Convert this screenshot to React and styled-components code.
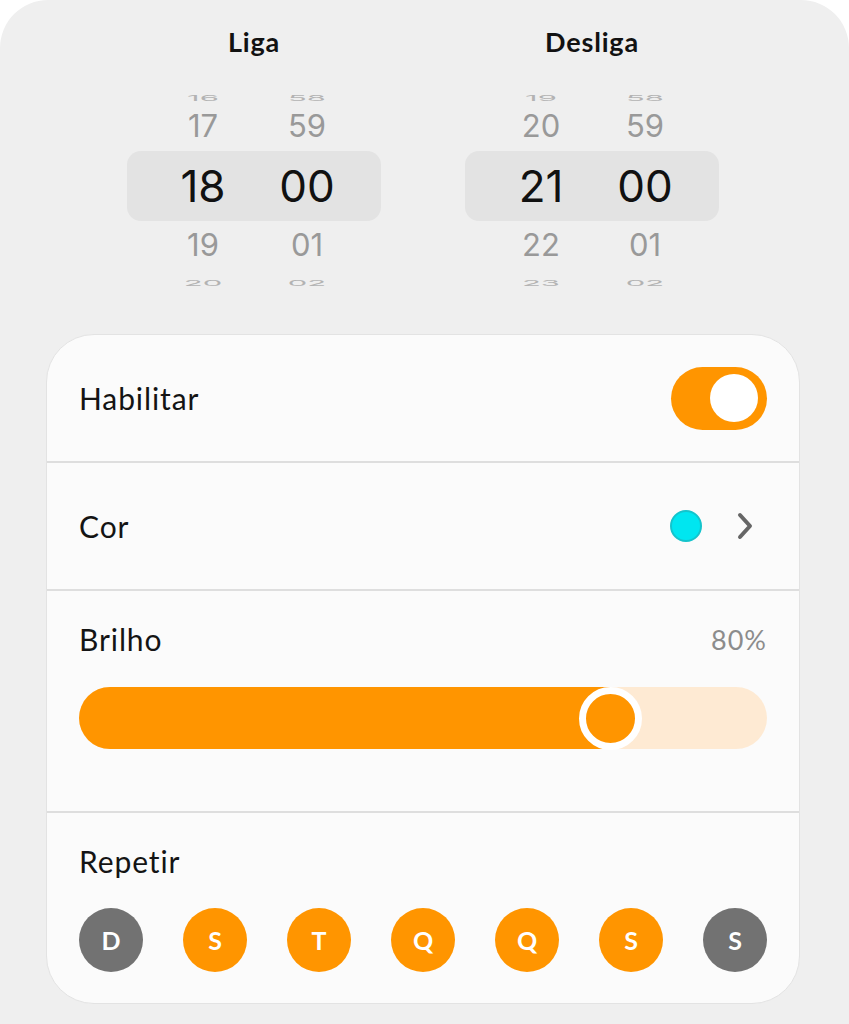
import React from 'react'
import styled, { createGlobalStyle } from 'styled-components'

const ORANGE = '#ff9500'

const Global = createGlobalStyle`
    html, body {
        margin: 0;
        padding: 0;
        background: #ffffff;
    }
    * {
        box-sizing: border-box;
    }
`

const Screen = styled.div`
    min-height: 1024px;
    background: #efefef;
    border-radius: 48px 48px 0 0;
    padding: 27px 0 0 46px;
    font-family: Lato, "Open Sans", sans-serif;
    color: #121212;
`

const Pickers = styled.div`
    display: grid;
    grid-template-columns: 254px 254px;
    column-gap: 84px;
    margin-left: 81px;
`

const PickerColumn = styled.div`
    display: flex;
    flex-direction: column;
    align-items: stretch;
`

const PickerTitle = styled.div`
    text-align: center;
    font-size: 27px;
    font-weight: 700;
    line-height: 30px;
    height: 30px;
    margin-bottom: 26px;
    letter-spacing: 0.8px;
`

const WheelRow = styled.div`
    display: grid;
    grid-template-columns: 104px 104px;
    padding-left: 24px;
    align-items: center;
    height: ${props => props.h}px;
    background: ${props => props.selected ? '#e3e3e3' : 'transparent'};
    border-radius: 14px;
`

const WheelNum = styled.span`
    font-family: Inter, "Liberation Sans", sans-serif;
    text-align: center;
    font-size: ${props => props.selected ? 44 : 31}px;
    font-weight: 400;
    color: ${props => props.selected ? '#111' : props.faded ? '#b3b3b3' : '#999999'};
    transform: ${props => props.faded ? 'scaleY(0.26)' : 'none'};
    line-height: 1;
`

const Card = styled.div`
    width: 754px;
    margin-top: 55px;
    background: #fbfbfb;
    border: 1.5px solid #e3e3e3;
    border-radius: 48px;
    overflow: hidden;
`

const Row = styled.div`
    display: flex;
    flex-direction: ${props => props.column ? 'column' : 'row'};
    align-items: ${props => props.column ? 'stretch' : 'center'};
    justify-content: ${props => props.column ? 'flex-start' : 'space-between'};
    height: ${props => props.h}px;
    padding: ${props => props.column ? '30px 32px 0 32px' : '0 32px'};
    border-bottom: ${props => props.last ? 'none' : '2px solid #dedede'};
`

const Label = styled.span`
    font-size: 30px;
    line-height: 36px;
    letter-spacing: 0.9px;
    color: #141414;
`

const Header = styled.div`
    display: flex;
    justify-content: space-between;
    align-items: center;
    height: 36px;
`

const Percent = styled.span`
    font-size: 27px;
    letter-spacing: 1px;
    color: #8c8c8c;
`

const Toggle = styled.div`
    width: 96px;
    height: 63px;
    border-radius: 32px;
    background: ${props => props.on ? ORANGE : '#d0d0d0'};
    display: flex;
    align-items: center;
    justify-content: ${props => props.on ? 'flex-end' : 'flex-start'};
    padding: 0 9px;
`

const Knob = styled.div`
    width: 48px;
    height: 48px;
    border-radius: 50%;
    background: #ffffff;
`

const ColorPick = styled.div`
    display: flex;
    align-items: center;
    gap: 35px;
    margin-right: 14px;
`

const Swatch = styled.div`
    width: 32px;
    height: 32px;
    border-radius: 50%;
    background: ${props => props.color};
    border: 2px solid #14c4cc;
`

const Track = styled.div`
    position: relative;
    margin-top: 30px;
    height: 62px;
    border-radius: 31px;
    background: #feead3;
`

const Fill = styled.div`
    position: absolute;
    left: 0;
    top: 0;
    bottom: 0;
    border-radius: 31px 0 0 31px;
    background: ${ORANGE};
`

const Thumb = styled.div`
    position: absolute;
    top: 50%;
    width: 63px;
    height: 63px;
    margin-left: -31.5px;
    margin-top: -31.5px;
    border-radius: 50%;
    background: ${ORANGE};
    border: 7px solid #ffffff;
`

const Days = styled.div`
    display: flex;
    justify-content: space-between;
    margin-top: 29px;
`

const Day = styled.div`
    width: 64px;
    height: 64px;
    border-radius: 50%;
    background: ${props => props.active ? ORANGE : '#727272'};
    color: #ffffff;
    display: flex;
    align-items: center;
    justify-content: center;
    font-size: 25px;
    font-weight: 700;
`

function Wheel({ title, hour, minute }) {
    const pad = n => String((n + 60) % 60).padStart(2, '0')
    const hr = n => String((n + 24) % 24).padStart(2, '0')
    return (
        <PickerColumn>
            <PickerTitle>{title}</PickerTitle>
            <WheelRow h={16}>
                <WheelNum faded>{hr(hour - 2)}</WheelNum>
                <WheelNum faded>{pad(minute - 2)}</WheelNum>
            </WheelRow>
            <WheelRow h={52}>
                <WheelNum>{hr(hour - 1)}</WheelNum>
                <WheelNum>{pad(minute - 1)}</WheelNum>
            </WheelRow>
            <WheelRow h={70} selected>
                <WheelNum selected>{hr(hour)}</WheelNum>
                <WheelNum selected>{pad(minute)}</WheelNum>
            </WheelRow>
            <WheelRow h={47}>
                <WheelNum>{hr(hour + 1)}</WheelNum>
                <WheelNum>{pad(minute + 1)}</WheelNum>
            </WheelRow>
            <WheelRow h={11}>
                <WheelNum faded>{hr(hour + 2)}</WheelNum>
                <WheelNum faded>{pad(minute + 2)}</WheelNum>
            </WheelRow>
        </PickerColumn>
    )
}

function Chevron() {
    return (
        <svg width="16" height="28" viewBox="0 0 16 28">
            <polyline points="3,3 13,14 3,25" fill="none" stroke="#666" strokeWidth="4" strokeLinecap="round" strokeLinejoin="round" />
        </svg>
    )
}

export default function App() {
    const brightness = 80
    const days = [
        { l: 'D', on: false },
        { l: 'S', on: true },
        { l: 'T', on: true },
        { l: 'Q', on: true },
        { l: 'Q', on: true },
        { l: 'S', on: true },
        { l: 'S', on: false },
    ]
    // thumb travels inside the track, fill ends at its centre
    const thumbX = `calc(31.5px + (100% - 63px) * ${brightness / 100})`

    return (
        <>
            <Global />
            <Screen>
                <Pickers>
                    <Wheel title="Liga" hour={18} minute={0} />
                    <Wheel title="Desliga" hour={21} minute={0} />
                </Pickers>
                <Card>
                    <Row h={128}>
                        <Label>Habilitar</Label>
                        <Toggle on>
                            <Knob />
                        </Toggle>
                    </Row>
                    <Row h={128}>
                        <Label>Cor</Label>
                        <ColorPick>
                            <Swatch color="#00e6f0" />
                            <Chevron />
                        </ColorPick>
                    </Row>
                    <Row h={222} column>
                        <Header>
                            <Label>Brilho</Label>
                            <Percent>{brightness}%</Percent>
                        </Header>
                        <Track>
                            <Fill style={{ width: thumbX }} />
                            <Thumb style={{ left: thumbX }} />
                        </Track>
                    </Row>
                    <Row h={190} column last>
                        <Label>Repetir</Label>
                        <Days>
                            {days.map((d, i) => (
                                <Day key={i} active={d.on}>{d.l}</Day>
                            ))}
                        </Days>
                    </Row>
                </Card>
            </Screen>
        </>
    )
}
